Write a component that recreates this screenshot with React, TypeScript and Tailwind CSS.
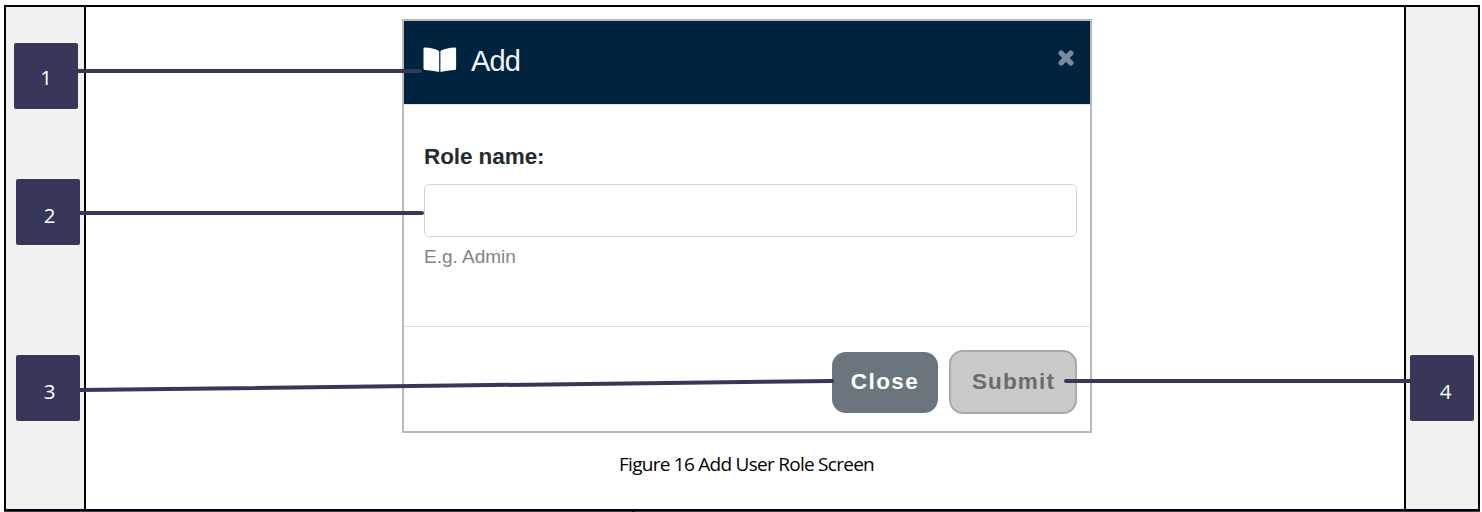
import type { ReactNode } from "react";

function Callout({ children, className }: { children: ReactNode; className: string }) {
  return (
    <div
      className={`flex h-[66px] w-16 shrink-0 items-center justify-center rounded-[2px] bg-[#373859] font-['Open_Sans','Noto_Sans',sans-serif] text-[20.5px] leading-none text-white ${className}`}
    >
      {children}
    </div>
  );
}

function BookIcon() {
  return (
    <svg width="34" height="26" viewBox="0 0 34 26" className="block shrink-0" fill="#fff">
      <path d="M.5 1.8Q.5.3 2 .4C7 .7 12 1.6 15.3 3.4Q16.2 3.8 16.2 4.6V24.3Q16.2 25.3 15.2 24.8C11.5 23.8 6.5 23.2 1.8 22.9Q.5 22.8.5 21.5Z" />
      <path d="M33.1 1.8Q33.1.3 31.6.4C26.6.7 21.8 1.6 18.3 3.4Q17.4 3.8 17.4 4.6V24.3Q17.4 25.3 18.4 24.8C22.1 23.8 27.1 23.2 31.8 22.9Q33.1 22.8 33.1 21.5Z" />
    </svg>
  );
}

function CloseIcon() {
  return (
    <svg width="16" height="16" viewBox="0 0 16 16" className="block" stroke="#7c899d" strokeWidth="5.4" strokeLinecap="round">
      <path d="M3.2 3.2L12.8 12.8M12.8 3.2L3.2 12.8" />
    </svg>
  );
}

function AddDialog() {
  return (
    <section className="flex h-[414px] w-[690px] flex-col border-2 border-[#b9b9b9] bg-white font-['Liberation_Sans',Arial,sans-serif]">
      <header className="flex h-[84px] shrink-0 items-start border-b border-[#dfe2e6] bg-[#002340] pr-4 pl-[19px]">
        <div className="pt-[26px]">
          <BookIcon />
        </div>
        <h1 className="ml-[14px] pt-[24px] text-[29px] leading-8 tracking-[-0.8px] text-[#f5f7f9]">Add</h1>
        <button type="button" aria-label="Close dialog" className="mt-[29px] ml-auto">
          <CloseIcon />
        </button>
      </header>
      <div className="flex grow flex-col pt-[38px] pr-[13px] pl-5">
        <label htmlFor="role" className="text-[22.5px] leading-7 font-bold tracking-[-0.08px] text-[#252a2e]">
          Role name:
        </label>
        <input id="role" className="mt-[13px] h-[53px] w-full rounded-[5px] border border-[#ced4da] bg-white px-4" />
        <p className="mt-[9px] text-[19px] leading-[22px] text-[#7d858c]">E.g. Admin</p>
      </div>
      <footer className="flex h-[105px] shrink-0 items-start justify-end gap-[11px] border-t border-[#dee2e6] pt-[23px] pr-[13px]">
        <button
          type="button"
          className="mt-[2px] h-[61px] w-[106px] rounded-[14px] bg-[#6c757d] pb-px text-[22.5px] font-bold tracking-[1.4px] text-white"
        >
          Close
        </button>
        <button
          type="button"
          className="h-[64px] w-[128px] rounded-[14px] border-2 border-[#a9a9a9] bg-[#cacaca] pl-px text-[22.5px] font-bold tracking-[1.15px] text-[#6b6b6b]"
        >
          Submit
        </button>
      </footer>
    </section>
  );
}

export default function App() {
  return (
    <main className="relative flex h-[512px] w-[1482px] flex-col overflow-hidden bg-white pt-[5px] pl-1">
      <div className="flex h-[506px] w-[1476px] shrink-0 border-2 border-black">
        <aside className="flex w-20 shrink-0 flex-col border-r-2 border-black bg-[#f1f1f1]">
          <Callout className="mt-9 ml-2 pt-[3px]">1</Callout>
          <Callout className="mt-[70px] ml-[10px] pt-[7px] pl-[3px]">2</Callout>
          <Callout className="mt-[110px] ml-[10px] pt-[7px] pl-[3px]">3</Callout>
        </aside>
        <div className="flex grow flex-col pt-3 pl-[316px]">
          <AddDialog />
          <p className="mt-[18px] ml-[217px] font-['Open_Sans','Noto_Sans',sans-serif] text-[19px] leading-[26px] tracking-[-0.73px] whitespace-nowrap text-black">
            Figure 16 Add User Role Screen
          </p>
        </div>
        <aside className="flex w-[74px] shrink-0 flex-col border-l-2 border-black bg-[#f1f1f1]">
          <Callout className="mt-[348px] ml-1 pt-[7px] pl-[7px]">4</Callout>
        </aside>
      </div>
      <div className="flex h-px w-[1476px] shrink-0 bg-[#373859] pl-[628px]">
        <span className="h-px w-[2px] bg-black" />
      </div>
      <svg className="pointer-events-none absolute inset-0" width="1482" height="512" viewBox="0 0 1482 512" stroke="#373859" strokeWidth="4" strokeLinecap="round">
        <path d="M78 71H420" />
        <path d="M80 213H422" />
        <path d="M80 390L832 381" />
        <path d="M1066 381H1410" />
      </svg>
    </main>
  );
}
